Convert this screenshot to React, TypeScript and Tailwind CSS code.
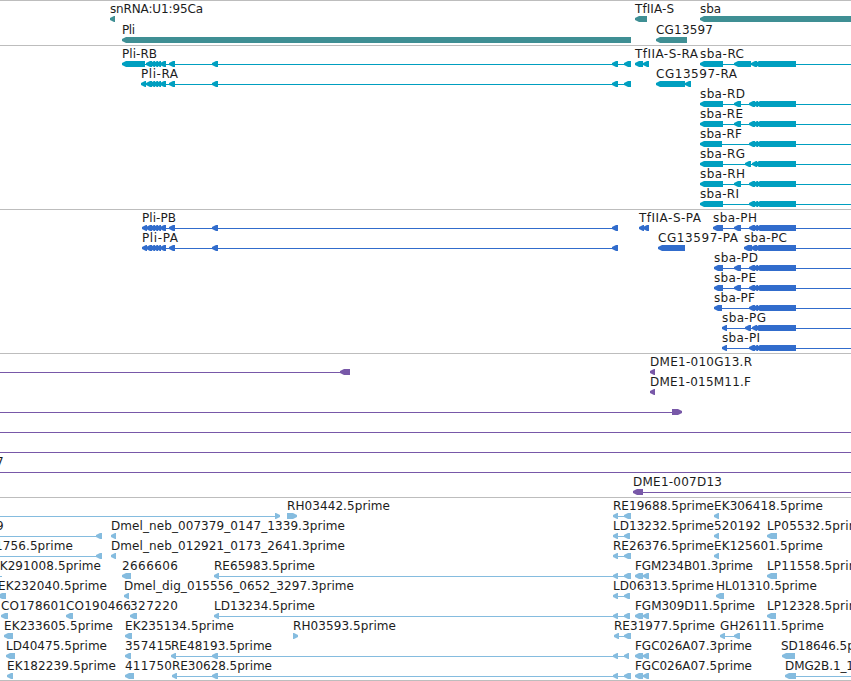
type Label = [x: number, width: number, text: string];
// a segment whose end is smaller than its start points to the left
type Segment = [from: number, to: number];

type Row = {
  labels?: Label[];
  lines?: [number, number][];
  segments?: Segment[];
};

type TrackProps = {
  name: string;
  color: string;
  rows: Row[];
  rowHeight?: number;
  className: string;
};

const VIEW_WIDTH = 851;
const HEAD = 4;

const genes: Row[] = [
  {
    labels: [[110, 93, 'snRNA:U1:95Ca'], [635, 39, 'TfIIA-S'], [700, 21, 'sba']],
    segments: [[115, 110], [647, 635], [860, 700]],
  },
  {
    labels: [[122, 13, 'Pli'], [656, 57, 'CG13597']],
    segments: [[631, 122], [687, 656]],
  },
];

const pliExons: Segment[] = [[152, 146], [155, 150], [158, 153], [161, 156], [166, 160], [175, 169], [218, 212]];
const sbaTail: Segment[] = [[755, 749], [758, 753], [796, 756]];

const transcripts: Row[] = [
  {
    labels: [[122, 35, 'Pli-RB'], [635, 63, 'TfIIA-S-RA'], [700, 44, 'sba-RC']],
    lines: [[122, 631], [635, 649], [700, 851]],
    segments: [[145, 122], ...pliExons, [618, 612], [631, 624], [643, 635], [649, 643], [723, 700], [751, 734], [757, 751], [796, 755]],
  },
  {
    labels: [[141, 37, 'Pli-RA'], [656, 81, 'CG13597-RA']],
    lines: [[141, 631], [656, 691]],
    segments: [[146, 141], ...pliExons, [618, 612], [631, 624], [685, 656], [691, 685]],
  },
  {
    labels: [[700, 45, 'sba-RD']],
    lines: [[700, 851]],
    segments: [[723, 700], [741, 734], ...sbaTail],
  },
  {
    labels: [[700, 43, 'sba-RE']],
    lines: [[700, 851]],
    segments: [[723, 700], [741, 734], ...sbaTail],
  },
  {
    labels: [[700, 42, 'sba-RF']],
    lines: [[700, 851]],
    segments: [[722, 700], ...sbaTail],
  },
  {
    labels: [[700, 45, 'sba-RG']],
    lines: [[700, 851]],
    segments: [[723, 700], [751, 745], [757, 752], [796, 755]],
  },
  {
    labels: [[700, 45, 'sba-RH']],
    lines: [[700, 851]],
    segments: [[723, 700], [741, 734], ...sbaTail],
  },
  {
    labels: [[700, 39, 'sba-RI']],
    lines: [[700, 851]],
    segments: [[723, 700], ...sbaTail],
  },
];

const proteins: Row[] = [
  {
    labels: [[142, 34, 'Pli-PB'], [639, 62, 'TfIIA-S-PA'], [713, 44, 'sba-PH']],
    lines: [[142, 618], [639, 649], [713, 851]],
    segments: [[147, 142], ...pliExons, [618, 612], [644, 639], [649, 643], [723, 713], [741, 734], ...sbaTail],
  },
  {
    labels: [[142, 36, 'Pli-PA'], [658, 80, 'CG13597-PA'], [744, 43, 'sba-PC']],
    lines: [[142, 618], [744, 851]],
    segments: [[147, 142], ...pliExons, [618, 612], [685, 658], [752, 744], [757, 751], [796, 755]],
  },
  {
    labels: [[714, 44, 'sba-PD']],
    lines: [[714, 851]],
    segments: [[723, 714], [741, 734], ...sbaTail],
  },
  {
    labels: [[714, 42, 'sba-PE']],
    lines: [[714, 851]],
    segments: [[723, 714], [741, 734], ...sbaTail],
  },
  {
    labels: [[714, 41, 'sba-PF']],
    lines: [[714, 851]],
    segments: [[722, 714], ...sbaTail],
  },
  {
    labels: [[722, 44, 'sba-PG']],
    lines: [[722, 851]],
    segments: [[727, 722], [751, 745], [757, 752], [796, 755]],
  },
  {
    labels: [[722, 38, 'sba-PI']],
    lines: [[722, 851]],
    segments: [[727, 722], ...sbaTail],
  },
];

const bacs: Row[] = [
  {
    labels: [[650, 102, 'DME1-010G13.R']],
    lines: [[0, 349]],
    segments: [[350, 340], [655, 650]],
  },
  { labels: [[650, 101, 'DME1-015M11.F']], segments: [[655, 650]] },
  { lines: [[0, 682]], segments: [[672, 682]] },
  { lines: [[0, 851]] },
  { lines: [[0, 851]] },
  { labels: [[-4, 8, '7']], lines: [[0, 851]] },
  {
    labels: [[633, 89, 'DME1-007D13']],
    lines: [[633, 851]],
    segments: [[643, 633]],
  },
];

const ests: Row[] = [
  {
    labels: [[287, 103, 'RH03442.5prime'], [613, 101, 'RE19688.5prime'], [714, 109, 'EK306418.5prime']],
    lines: [[0, 280], [613, 630]],
    segments: [[275, 280], [287, 297], [618, 613], [631, 624], [719, 714]],
  },
  {
    labels: [[-4, 8, '9'], [111, 234, 'Dmel_neb_007379_0147_1339.3prime'], [613, 101, 'LD13232.5prime'], [714, 47, '520192'], [767, 101, 'LP05532.5prime']],
    lines: [[0, 102], [613, 630]],
    segments: [[102, 96], [116, 111], [618, 613], [630, 624], [719, 714], [777, 767]],
  },
  {
    labels: [[-5, 78, '1756.5prime'], [111, 234, 'Dmel_neb_012921_0173_2641.3prime'], [613, 101, 'RE26376.5prime'], [714, 109, 'EK125601.5prime']],
    lines: [[0, 102], [613, 630]],
    segments: [[102, 96], [116, 111], [618, 613], [631, 624], [719, 714]],
  },
  {
    labels: [[-8, 109, 'EK291008.5prime'], [122, 56, '2666606'], [214, 101, 'RE65983.5prime'], [635, 118, 'FGM234B01.3prime'], [767, 101, 'LP11558.5prime']],
    lines: [[0, 2], [214, 631], [635, 649]],
    segments: [[131, 122], [219, 214], [618, 613], [631, 624], [643, 635], [649, 643], [777, 767]],
  },
  {
    labels: [[-2, 109, 'EK232040.5prime'], [124, 230, 'Dmel_dig_015556_0652_3297.3prime'], [613, 101, 'LD06313.5prime'], [716, 101, 'HL01310.5prime']],
    lines: [[613, 630]],
    segments: [[6, -2], [129, 124], [618, 613], [630, 624], [724, 716]],
  },
  {
    labels: [[1, 65, 'CO178601'], [66, 65, 'CO190466'], [130, 48, '327220'], [214, 101, 'LD13234.5prime'], [635, 120, 'FGM309D11.5prime'], [767, 101, 'LP12328.5prime']],
    lines: [[214, 630], [635, 649]],
    segments: [[8, 1], [73, 66], [137, 130], [219, 214], [618, 613], [630, 624], [643, 635], [649, 643], [776, 767]],
  },
  {
    labels: [[4, 109, 'EK233605.5prime'], [125, 109, 'EK235134.5prime'], [293, 103, 'RH03593.5prime'], [614, 101, 'RE31977.5prime'], [720, 104, 'GH26111.5prime']],
    lines: [[614, 631], [720, 740]],
    segments: [[13, 4], [132, 125], [293, 298], [619, 614], [631, 624], [725, 720], [740, 734]],
  },
  {
    labels: [[6, 101, 'LD40475.5prime'], [125, 47, '357415'], [171, 101, 'RE48193.5prime'], [635, 117, 'FGC026A07.3prime'], [781, 101, 'SD18646.5prime']],
    lines: [[171, 629], [635, 649]],
    segments: [[15, 6], [131, 125], [176, 171], [218, 212], [618, 613], [629, 624], [643, 635], [649, 643], [795, 782]],
  },
  {
    labels: [[7, 109, 'EK182239.5prime'], [125, 47, '411750'], [172, 100, 'RE30628.5prime'], [635, 117, 'FGC026A07.5prime'], [785, 69, 'DMG2B.1_1']],
    lines: [[172, 631], [635, 649], [785, 851]],
    segments: [[13, 7], [134, 125], [177, 172], [218, 212], [618, 613], [631, 624], [643, 635], [649, 643], [796, 785]],
  },
];

// bar with a blunt pointed end, 6px high
function segmentPoints([from, to]: Segment) {
  const dir = to < from ? -1 : 1;
  const neck = to - dir * Math.min(HEAD, Math.abs(to - from));
  return `${from},15 ${neck},15 ${to},17 ${to},19 ${neck},21 ${from},21`;
}

function FeatureRow({ row, height }: { row: Row; height: number }) {
  return (
    <svg className="block shrink-0 overflow-visible" width={VIEW_WIDTH} height={height}>
      {row.lines?.map(([x1, x2]) => (
        <rect key={x1} x={x1} y={18} width={x2 - x1} height={1} fill="currentColor" />
      ))}
      {row.segments?.map((s) => (
        <polygon key={s.join('-')} points={segmentPoints(s)} fill="currentColor" />
      ))}
      {row.labels?.map(([x, width, text]) => (
        <text key={text} x={x} y={12} textLength={width} className="fill-[#1c1c1c]">{text}</text>
      ))}
    </svg>
  );
}

function Track({ name, color, rows, rowHeight = 20, className }: TrackProps) {
  return (
    <section aria-label={name} className={`border-t border-[#bdbdbd] ${className} ${color}`}>
      {rows.map((row, i) => (
        <FeatureRow key={i} row={row} height={rowHeight} />
      ))}
    </section>
  );
}

export default function App() {
  return (
    <main className="flex h-[681px] w-[851px] flex-col overflow-hidden border-b border-[#bdbdbd] bg-white font-['DejaVu_Sans',sans-serif] text-[12px]">
      <Track name="genes" color="text-[#3f8f94]" rows={genes} rowHeight={21} className="pb-[2px]" />
      <Track name="transcripts" color="text-[#009fc0]" rows={transcripts} className="pb-[3px]" />
      <Track name="proteins" color="text-[#316ccc]" rows={proteins} className="pb-[3px]" />
      <Track name="bacs" color="text-[#7858a8]" rows={bacs} className="pb-[3px]" />
      <Track name="ests" color="text-[#85bcdf]" rows={ests} className="pb-[2px]" />
    </main>
  );
}
